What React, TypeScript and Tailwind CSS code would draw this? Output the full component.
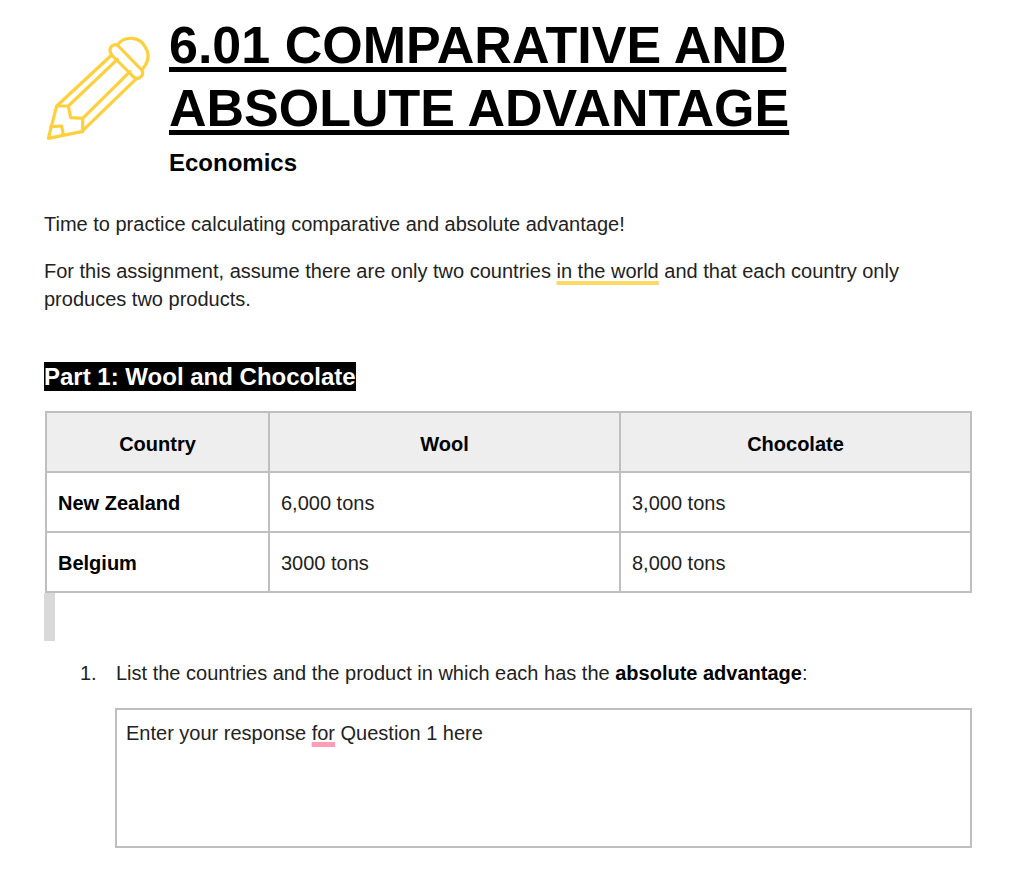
export default function App() {
  const font = "[font-family:'Liberation_Sans',Arial,sans-serif]";
  const cell = "border-2 border-[#bfbfbf] px-[11px] h-[60px] align-middle";
  return (
    <div className={`${font} bg-white w-[1014px] h-[887px] overflow-hidden pl-[44px] pr-[42px] text-[20px] leading-[28px] text-[#222222]`}>
      {/* Header */}
      <div className="flex items-start h-[192px] pt-[14px]">
        <svg width="110" height="110" viewBox="42 36 330 330" className="mt-[18px] shrink-0" fill="none" stroke="#ffd03c" strokeWidth="9.5" strokeLinejoin="round" strokeLinecap="round">
          <path d="M245 105 L80 258 L55 355 L155 335 L320 175" />
          <path d="M80 258 L115 258 L122 293 L158 295 L158 335" />
          <path d="M115 258 L262 118 M158 295 L300 155" />
          <path d="M62 320 L95 318 L100 345" />
          <path d="M262 75 L335 150 Q345 165 325 175 Q315 178 305 165 L245 105 Q235 90 245 78 Q255 72 262 75 Z" />
          <path d="M262 75 C285 45 330 50 345 80 C362 105 352 130 337 148" />
        </svg>
        <div className="ml-[15px]">
          <h1 className="text-[52px] leading-[63px] font-bold text-black underline decoration-[5px] underline-offset-[4px]">
            6.01 COMPARATIVE AND
            <br />
            ABSOLUTE ADVANTAGE
          </h1>
          <div className="mt-[9px] text-[24px] leading-[28px] font-bold text-black">Economics</div>
        </div>
      </div>

      <p className="mt-[18px]">Time to practice calculating comparative and absolute advantage!</p>
      <p className="mt-[19px]">
        For this assignment, assume there are only two countries{" "}
        <span className="underline decoration-[#ffd966] decoration-[4px] underline-offset-[3px] [text-decoration-skip-ink:none]">in the world</span> and that each country only
        <br />
        produces two products.
      </p>

      <h2 className="mt-[49px] h-[29px] leading-[29px]">
        <span className="bg-black px-0 text-white font-bold text-[24px] inline-block h-[29px] leading-[29px]">Part 1: Wool and Chocolate</span>
      </h2>

      {/* Table */}
      <table className="mt-[20px] ml-[1px] w-[925px] table-fixed border-collapse">
        <colgroup>
          <col className="w-[223px]" />
          <col className="w-[351px]" />
          <col className="w-[351px]" />
        </colgroup>
        <thead>
          <tr className="bg-[#eeeeee] text-black font-bold">
            <th className={`${cell} text-center pt-[3px]`}>Country</th>
            <th className={`${cell} text-center pt-[3px]`}>Wool</th>
            <th className={`${cell} text-center pt-[3px]`}>Chocolate</th>
          </tr>
        </thead>
        <tbody>
          <tr>
            <td className={`${cell} pt-[2px] font-bold text-black`}>New Zealand</td>
            <td className={`${cell} pt-[2px]`}>6,000 tons</td>
            <td className={`${cell} pt-[2px]`}>3,000 tons</td>
          </tr>
          <tr>
            <td className={`${cell} pt-[2px] font-bold text-black`}>Belgium</td>
            <td className={`${cell} pt-[2px]`}>3000 tons</td>
            <td className={`${cell} pt-[2px]`}>8,000 tons</td>
          </tr>
        </tbody>
      </table>
      <div className="w-[11px] h-[48px] bg-[#d9d9d9]" />

      {/* Question 1 */}
      <div className="mt-[18px] flex pl-[36px]">
        <span className="w-[36px]">1.</span>
        <span>
          List the countries and the product in which each has the <b className="text-black">absolute advantage</b>:
        </span>
      </div>
      <div className="mt-[21px] ml-[71px] w-[857px] h-[140px] border-2 border-[#bfbfbf] pl-[9px] pr-[10px] py-[9px]">
        Enter your response <span className="underline decoration-[#ff9db4] decoration-[5px] underline-offset-[2px] [text-decoration-skip-ink:none]">for</span> Question 1 here
      </div>
    </div>
  );
}
